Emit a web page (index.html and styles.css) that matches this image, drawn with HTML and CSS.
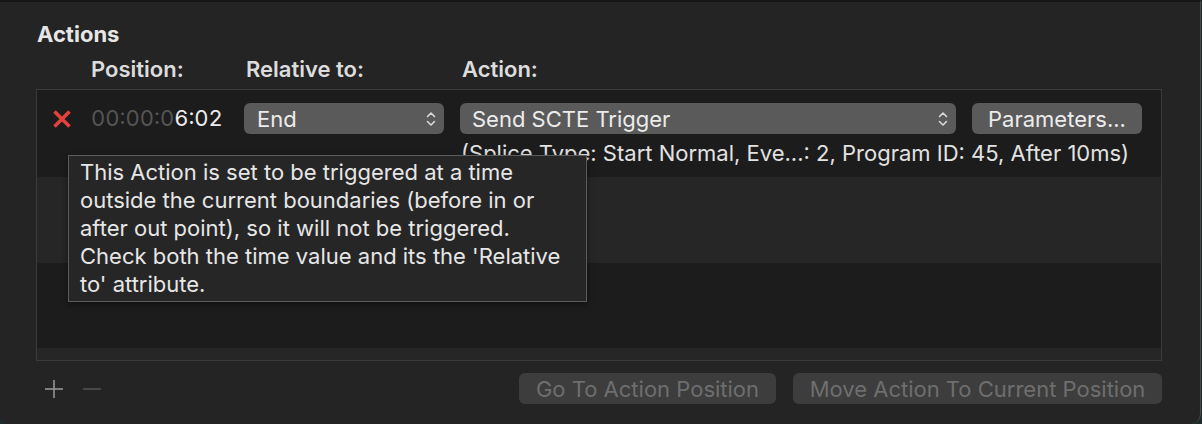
FILE: index.html
```html
<!DOCTYPE html>
<html>
<head>
<meta charset="utf-8">
<link rel="stylesheet" href="styles.css">
</head>
<body>
<div class="window">
  <div class="title">Actions</div>
  <div class="grid heads">
    <div></div>
    <div class="head">Position:</div>
    <div class="head">Relative to:</div>
    <div class="head">Action:</div>
    <div></div>
  </div>
  <div class="table">
    <div class="row dark first">
      <div class="grid">
        <div class="xcell">
          <svg class="xicon" width="20" height="18" viewBox="0 0 20 18"><path d="M2.5 1.5 L17.5 16.5 M17.5 1.5 L2.5 16.5" stroke="#e2423b" stroke-width="3.6" fill="none"/></svg>
        </div>
        <div class="time"><span class="dim">00:00:0</span>6:02</div>
        <div class="popup end"><span>End</span>
          <svg class="chev" width="10" height="16" viewBox="0 0 10 16"><path d="M1.5 5.5 L5 2 L8.5 5.5 M1.5 10.5 L5 14 L8.5 10.5" stroke="#d8d8d8" stroke-width="1.6" fill="none" stroke-linecap="round" stroke-linejoin="round"/></svg>
        </div>
        <div class="popup send"><span>Send SCTE Trigger</span>
          <svg class="chev" width="10" height="16" viewBox="0 0 10 16"><path d="M1.5 5.5 L5 2 L8.5 5.5 M1.5 10.5 L5 14 L8.5 10.5" stroke="#d8d8d8" stroke-width="1.6" fill="none" stroke-linecap="round" stroke-linejoin="round"/></svg>
        </div>
        <div class="btn params">Parameters...</div>
        <div class="detail">(Splice Type: Start Normal, Eve...: 2, Program ID: 45, After 10ms)</div>
      </div>
    </div>
    <div class="row light"></div>
    <div class="row dark third"></div>
    <div class="filler"></div>
  </div>
  <div class="footer">
    <div class="plus">
      <svg width="20" height="20" viewBox="0 0 20 20"><path d="M10 1 V19 M1 10 H19" stroke="#9a9a9a" stroke-width="1.5" fill="none"/></svg>
    </div>
    <div class="minus">
      <svg width="20" height="20" viewBox="0 0 20 20"><path d="M1 10 H19" stroke="#555555" stroke-width="1.5" fill="none"/></svg>
    </div>
    <div class="spacer"></div>
    <div class="btn disabled goto">Go To Action Position</div>
    <div class="btn disabled move">Move Action To Current Position</div>
  </div>
  <div class="tooltip">This Action is set to be triggered at a time<br>outside the current boundaries (before in or<br>after out point), so it will not be triggered.<br>Check both the time value and its the 'Relative<br>to' attribute.</div>
</div>
</body>
</html>
```

FILE: styles.css
```css
* { box-sizing: border-box; }
html, body {
  margin: 0;
  padding: 0;
  background: #1f2a2c;
}
body {
  width: 1202px;
  height: 424px;
  overflow: hidden;
  font-family: Inter, "Noto Sans", sans-serif;
  font-size: 22px;
  color: #e2e2e2;
}
.window {
  position: relative;
  width: 1201px;
  height: 424px;
  background: #242424;
  border-top: 2px solid #161616;
  border-right: 1px solid #4a4a4a;
  border-bottom-left-radius: 10px;
  border-bottom-right-radius: 10px;
  padding-top: 19px;
}
.title {
  font-weight: 700;
  margin-left: 37px;
  line-height: 26px;
  height: 26px;
  color: #e6e6e6;
}
.grid {
  display: grid;
  grid-template-columns: 54px 153px 216px 512px 170px;
  align-items: center;
}
.heads {
  margin-top: 9px;
  padding-left: 37px;
  height: 26px;
  line-height: 26px;
}
.head {
  font-weight: 600;
  color: #dcdcdc;
}
.heads .head:nth-child(3),
.heads .head:nth-child(4) { padding-left: 2px; }
.table {
  margin-top: 7px;
  margin-left: 36px;
  width: 1126px;
  border: 1px solid #3a3a3a;
}
.row { height: 86px; }
.row.first { height: 87px; padding-top: 13px; }
.row.third { height: 85px; }
.dark { background: #1c1c1c; }
.light { background: #262626; }
.filler { height: 12px; background: #262626; }
.xcell { padding-left: 15px; height: 31px; display: flex; align-items: center; }
.xicon { display: block; }
.time {
  font-variant-numeric: tabular-nums;
  color: #ececec;
  line-height: 31px;
}
.time .dim { color: #555555; }
.popup {
  height: 31px;
  background: #5a5a5a;
  border-radius: 6px;
  display: flex;
  align-items: center;
  justify-content: space-between;
  padding: 0 8px 0 13px;
  color: #ececec;
}
.popup.end { width: 200px; }
.popup.send { width: 496px; padding-left: 12px; }
.chev { display: block; }
.btn {
  height: 31px;
  border-radius: 6px;
  background: #5a5a5a;
  display: flex;
  align-items: center;
  justify-content: center;
  color: #ececec;
}
.params { width: 170px; }
.detail {
  grid-column: 4 / 6;
  padding-left: 1px;
  margin-top: 6px;
  line-height: 26px;
  white-space: nowrap;
  color: #e2e2e2;
}
.footer {
  display: flex;
  align-items: center;
  margin-top: 12px;
  padding-left: 44px;
  padding-right: 38px;
  height: 31px;
}
.plus, .minus { display: flex; align-items: center; }
.minus { margin-left: 18px; }
.spacer { flex: 1; }
.btn.disabled {
  background: #3d3d3d;
  color: #6e6e6e;
}
.goto { width: 257px; }
.move { width: 369px; margin-left: 17px; }
.tooltip {
  position: absolute;
  left: 68px;
  top: 153px;
  width: 519px;
  height: 147px;
  background: #262626;
  border: 1px solid #5c5c5c;
  box-shadow: 0 2px 6px rgba(0,0,0,0.45);
  padding: 2px 11px 0 11px;
  line-height: 28px;
  white-space: nowrap;
  color: #e6e6e6;
}
```
